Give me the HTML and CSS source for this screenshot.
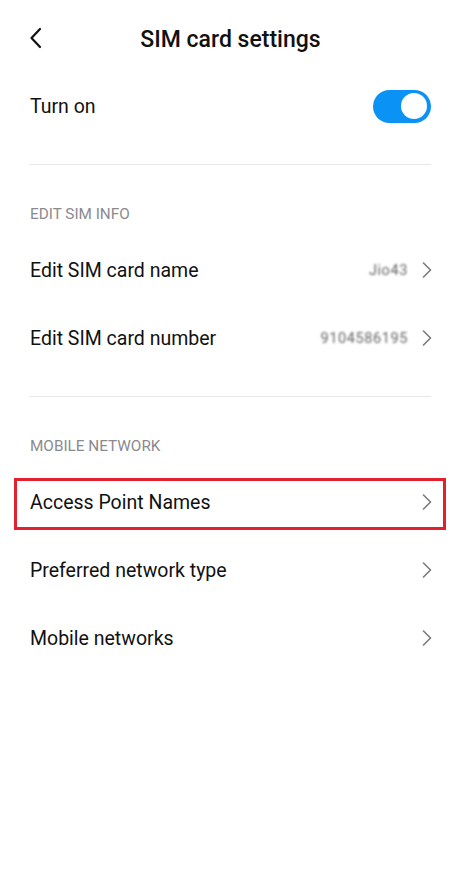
FILE: index.html
```html
<!DOCTYPE html>
<html lang="en">
<head>
<meta charset="utf-8">
<title>SIM card settings</title>
<link rel="stylesheet" href="styles.css">
</head>
<body>
<div class="screen">
  <header class="topbar">
    <span class="back">
      <svg width="14" height="22" viewBox="0 0 14 22"><path d="M11 2 L2.5 11 L11 20" fill="none" stroke="#111" stroke-width="2.2" stroke-linecap="round" stroke-linejoin="round"/></svg>
    </span>
    <h1 class="title">SIM card settings</h1>
  </header>

  <div class="row toggle-row">
    <span class="label">Turn on</span>
    <span class="switch"><span class="knob"></span></span>
  </div>
  <div class="divider"></div>

  <div class="section">EDIT SIM INFO</div>
  <div class="row">
    <span class="label">Edit SIM card name</span>
    <span class="right"><span class="value">Jio43</span><svg class="chev" width="10" height="16" viewBox="0 0 10 16"><path d="M1.5 1 L8.5 8 L1.5 15" fill="none" stroke="#7b7b7b" stroke-width="1.6" stroke-linecap="round" stroke-linejoin="round"/></svg></span>
  </div>
  <div class="row">
    <span class="label">Edit SIM card number</span>
    <span class="right"><span class="value">9104586195</span><svg class="chev" width="10" height="16" viewBox="0 0 10 16"><path d="M1.5 1 L8.5 8 L1.5 15" fill="none" stroke="#7b7b7b" stroke-width="1.6" stroke-linecap="round" stroke-linejoin="round"/></svg></span>
  </div>
  <div class="divider divider-2"></div>

  <div class="section">MOBILE NETWORK</div>
  <div class="row highlighted">
    <span class="label">Access Point Names</span>
    <span class="right"><svg class="chev" width="10" height="16" viewBox="0 0 10 16"><path d="M1.5 1 L8.5 8 L1.5 15" fill="none" stroke="#7b7b7b" stroke-width="1.6" stroke-linecap="round" stroke-linejoin="round"/></svg></span>
  </div>
  <div class="row">
    <span class="label">Preferred network type</span>
    <span class="right"><svg class="chev" width="10" height="16" viewBox="0 0 10 16"><path d="M1.5 1 L8.5 8 L1.5 15" fill="none" stroke="#7b7b7b" stroke-width="1.6" stroke-linecap="round" stroke-linejoin="round"/></svg></span>
  </div>
  <div class="row">
    <span class="label">Mobile networks</span>
    <span class="right"><svg class="chev" width="10" height="16" viewBox="0 0 10 16"><path d="M1.5 1 L8.5 8 L1.5 15" fill="none" stroke="#7b7b7b" stroke-width="1.6" stroke-linecap="round" stroke-linejoin="round"/></svg></span>
  </div>
</div>
</body>
</html>
```

FILE: styles.css
```css
* { box-sizing: border-box; }
html, body { margin: 0; padding: 0; background: #fff; }
body { font-family: Roboto, "Noto Sans", "Liberation Sans", sans-serif; color: #111; }
.screen { width: 461px; min-height: 893px; background: #fff; }

.topbar {
  height: 78px;
  display: flex;
  align-items: center;
  justify-content: center;
  position: relative;
}
.back {
  position: absolute;
  left: 29px;
  top: 27px;
  width: 14px;
  height: 22px;
  display: flex;
}
.title {
  margin: 0;
  font-size: 23px;
  font-weight: 500;
  color: #111;
}

.row {
  height: 68px;
  display: flex;
  align-items: center;
  justify-content: space-between;
  padding: 0 29px 0 30px;
  position: relative;
}
.toggle-row { height: 56px; }
.label { font-size: 19.5px; color: #111; }
.right { display: flex; align-items: center; gap: 14px; }
.value {
  font-size: 14.5px;
  color: #666;
  letter-spacing: 0.6px;
  filter: blur(0.8px);
}
.chev { display: block; }

.switch {
  width: 58px;
  height: 33px;
  border-radius: 17px;
  background: #0a93f5;
  display: flex;
  align-items: center;
  justify-content: flex-end;
  padding-right: 4px;
  margin-right: 1px;
}
.knob {
  width: 26px;
  height: 26px;
  border-radius: 50%;
  background: #fff;
}

.divider {
  height: 1px;
  background: #e6e6e6;
  margin: 30px 30px 0 30px;
}
.divider-2 { margin-top: 24px; }

.section {
  padding: 41px 30px 14px 30px;
  font-size: 15.3px;
  line-height: 16px;
  color: #8a8a8f;
}

.highlighted::after {
  content: "";
  position: absolute;
  left: 14px;
  right: 15px;
  top: 10px;
  bottom: 6px;
  border: 3px solid #e3202b;
}
```
